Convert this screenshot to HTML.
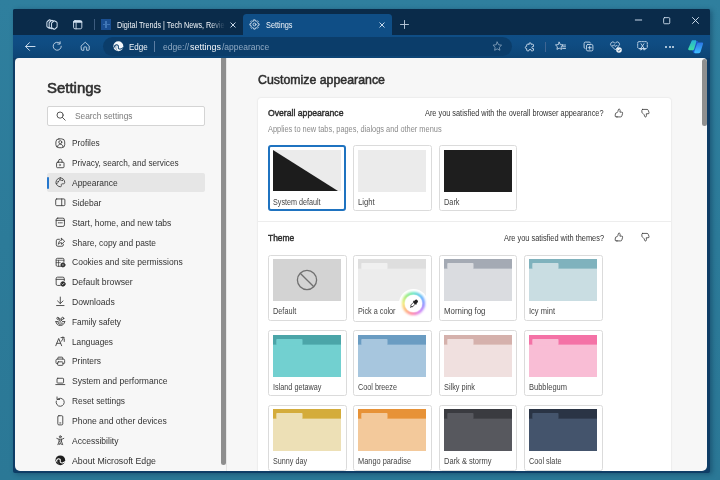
<!DOCTYPE html>
<html>
<head>
<meta charset="utf-8">
<style>
html,body{margin:0;padding:0;}
body{width:720px;height:480px;overflow:hidden;position:relative;background:#2e7d9b;font-family:"Liberation Sans",sans-serif;font-size:9px;}
.abs{position:absolute;}
svg{display:block;overflow:visible;}
.t{position:absolute;white-space:nowrap;line-height:1;transform-origin:0 0;}
#bg{left:0;top:0;width:720px;height:480px;background:linear-gradient(180deg,#2f7f9e 0%,#2c7b99 50%,#2b7896 100%);}
#win{left:12.7px;top:9.2px;width:697px;height:464.2px;background:#0e3d66;border-radius:2px;box-shadow:2px 1px 5px rgba(0,30,60,.38);}
#tabbar{left:12.7px;top:9.2px;width:697px;height:25.8px;background:#0a2b4a;border-radius:2px 2px 0 0;}
#activetab{left:242.9px;top:14px;width:148.8px;height:21.3px;background:#0f4e86;border-radius:3.5px 3.5px 0 0;}
#toolbar{left:12.7px;top:34.7px;width:697px;height:23.6px;background:linear-gradient(180deg,#0f4e86 0%,#0f4c82 40%,#0d4474 100%);}
#addr{left:102.5px;top:36.9px;width:409.5px;height:19.1px;background:#0b3d6a;border-radius:9.6px;}
#clip{left:15.1px;top:58.3px;width:691.7px;height:412.5px;overflow:hidden;border-radius:4px 4px 5px 5px;}
#clipin{left:-15.1px;top:-58.3px;width:720px;height:480px;}
#content{left:0;top:0;width:720px;height:480px;background:#f7f7f7;}
#split{left:221px;top:55px;width:5.2px;height:410.4px;background:#8e8e8e;border-radius:2.6px;}
#vline{left:226.3px;top:58px;width:1px;height:414px;background:#e6e6e6;}
#thumb{left:701.5px;top:59px;width:5.5px;height:67px;background:#8f8f8f;border-radius:2.5px;}
#card{left:257.7px;top:97.7px;width:413.2px;height:380px;background:#fff;border-radius:3px;box-shadow:0 0 2px rgba(0,0,0,.14);}
#divider{left:258px;top:221px;width:413px;height:1px;background:#ededed;}
#search{left:46.7px;top:105.8px;width:158.6px;height:20px;background:#fff;border:1px solid #d4d4d4;border-radius:2px;box-sizing:border-box;}
#selbg{left:46.7px;top:173.1px;width:158.6px;height:19.2px;background:#e6e6e6;border-radius:2px;}
#selbar{left:47.3px;top:176.7px;width:2.2px;height:12.6px;background:#2577cd;border-radius:1px;}
.tile{position:absolute;width:76.7px;height:64px;background:#fff;border:1px solid #dbdbdb;border-radius:2.5px;}
.tile.sel{width:74.2px;height:62.2px;border:2px solid #1f73c0;border-radius:3px;}
.tile .img{position:absolute;left:4px;top:3.5px;width:68px;height:42px;}
.ic{position:absolute;}
.ic *{fill:none;stroke:#3d3d3d;stroke-width:1;stroke-linecap:round;stroke-linejoin:round;}
.wic *{fill:none;stroke:#d3e2f1;stroke-width:.95;stroke-linecap:round;stroke-linejoin:round;}
</style>
</head>
<body>
<div id="bg" class="abs"></div>
<div id="win" class="abs"></div>
<div id="tabbar" class="abs"></div>
<div id="activetab" class="abs"></div>
<div id="toolbar" class="abs"></div>
<div id="addr" class="abs"></div>
<div id="clip" class="abs"><div id="clipin" class="abs">
<div id="content" class="abs"></div>
<div id="vline" class="abs"></div>
<div id="split" class="abs"></div>
<div id="thumb" class="abs"></div>
<div id="card" class="abs"></div>
<div id="divider" class="abs"></div>
<div id="search" class="abs"></div>
<div id="selbg" class="abs"></div>
<div id="selbar" class="abs"></div>
<div class="tile sel" style="left:268px;top:145px"></div>
<svg class="abs" style="left:273px;top:150px" width="68" height="41" viewBox="0 0 68 41"><rect width="68" height="41" fill="#ebebeb"/><polygon points="0,0 0,41 65,41" fill="#1c1c1c"/></svg>
<div class="tile" style="left:353.4px;top:145px"><div class="img" style="background:#ebebeb"></div></div>
<div class="tile" style="left:438.7px;top:145px"><div class="img" style="background:#1e1e1e"></div></div>
<div class="tile" style="left:268px;top:254.6px"><div class="img" style="background:#d3d3d3"></div><svg class="abs" style="left:28.200px;top:14.500px" width="20" height="20" viewBox="0 0 20 20"><circle cx="10" cy="10" r="9.6" fill="none" stroke="#707070" stroke-width="1.3"/><line x1="3.200" y1="3.200" x2="16.800" y2="16.800" stroke="#707070" stroke-width="1.3"/></svg></div>
<div class="tile" style="left:353.4px;top:254.6px;height:65.700px"><svg class="img" viewBox="0 0 68 41" preserveAspectRatio="none"><rect width="68" height="41" fill="#ececec"/><rect width="68" height="9.4" fill="#dedede"/><rect x="3.3" y="3.9" width="26.2" height="6" rx="0.8" fill="#f0f0f0"/></svg></div>
<div class="tile" style="left:438.7px;top:254.6px"><svg class="img" viewBox="0 0 68 41" preserveAspectRatio="none"><rect width="68" height="41" fill="#dadce0"/><rect width="68" height="9.4" fill="#a4aab4"/><rect x="3.3" y="3.9" width="26.2" height="6" rx="0.8" fill="#dadce0"/></svg></div>
<div class="tile" style="left:524px;top:254.6px"><svg class="img" viewBox="0 0 68 41" preserveAspectRatio="none"><rect width="68" height="41" fill="#c9dde2"/><rect width="68" height="9.4" fill="#7fb2bd"/><rect x="3.3" y="3.9" width="26.2" height="6" rx="0.8" fill="#c9dde2"/></svg></div>
<div class="tile" style="left:268px;top:330.4px"><svg class="img" viewBox="0 0 68 41" preserveAspectRatio="none"><rect width="68" height="41" fill="#72d0d0"/><rect width="68" height="9.4" fill="#4ba5a8"/><rect x="3.3" y="3.9" width="26.2" height="6" rx="0.8" fill="#72d0d0"/></svg></div>
<div class="tile" style="left:353.4px;top:330.4px"><svg class="img" viewBox="0 0 68 41" preserveAspectRatio="none"><rect width="68" height="41" fill="#a7c6de"/><rect width="68" height="9.4" fill="#6a9cc2"/><rect x="3.3" y="3.9" width="26.2" height="6" rx="0.8" fill="#a7c6de"/></svg></div>
<div class="tile" style="left:438.7px;top:330.4px"><svg class="img" viewBox="0 0 68 41" preserveAspectRatio="none"><rect width="68" height="41" fill="#f0e0df"/><rect width="68" height="9.4" fill="#d5b1ac"/><rect x="3.3" y="3.9" width="26.2" height="6" rx="0.8" fill="#f0e0df"/></svg></div>
<div class="tile" style="left:524px;top:330.4px"><svg class="img" viewBox="0 0 68 41" preserveAspectRatio="none"><rect width="68" height="41" fill="#f9bdd5"/><rect width="68" height="9.4" fill="#f472a6"/><rect x="3.3" y="3.9" width="26.2" height="6" rx="0.8" fill="#f9bdd5"/></svg></div>
<div class="tile" style="left:268px;top:404.6px"><svg class="img" viewBox="0 0 68 41" preserveAspectRatio="none"><rect width="68" height="41" fill="#ede0b6"/><rect width="68" height="9.4" fill="#d4ac3b"/><rect x="3.3" y="3.9" width="26.2" height="6" rx="0.8" fill="#ede0b6"/></svg></div>
<div class="tile" style="left:353.4px;top:404.6px"><svg class="img" viewBox="0 0 68 41" preserveAspectRatio="none"><rect width="68" height="41" fill="#f3c99b"/><rect width="68" height="9.4" fill="#e79237"/><rect x="3.3" y="3.9" width="26.2" height="6" rx="0.8" fill="#f3c99b"/></svg></div>
<div class="tile" style="left:438.7px;top:404.6px"><svg class="img" viewBox="0 0 68 41" preserveAspectRatio="none"><rect width="68" height="41" fill="#57585e"/><rect width="68" height="9.4" fill="#3a3b40"/><rect x="3.3" y="3.9" width="26.2" height="6" rx="0.8" fill="#57585e"/></svg></div>
<div class="tile" style="left:524px;top:404.6px"><svg class="img" viewBox="0 0 68 41" preserveAspectRatio="none"><rect width="68" height="41" fill="#44546c"/><rect width="68" height="9.4" fill="#2a3445"/><rect x="3.3" y="3.9" width="26.2" height="6" rx="0.8" fill="#44546c"/></svg></div>
<div class="abs" style="left:399.2px;top:288.9px;width:29px;height:29px;border-radius:50%;background:#fff"></div><div class="abs" style="left:402.2px;top:291.9px;width:23px;height:23px;border-radius:50%;filter:blur(1.1px);background:conic-gradient(from 0deg,#62e6c4,#5ab0ff 55deg,#8f84ff 100deg,#d57df2 145deg,#ff7fa6 185deg,#ffb070 228deg,#f3ea70 270deg,#92ea72 318deg,#62e6c4)"></div><div class="abs" style="left:405.4px;top:295.1px;width:16.6px;height:16.6px;border-radius:50%;background:#fff;box-shadow:0 0 1.5px 0.5px rgba(255,255,255,.9)"></div><svg class="abs" style="left:409px;top:298.6px" width="9.6" height="9.6" viewBox="0 0 12 12"><path d="M7.600 1.300a2.200 2.200 0 0 1 3.100 3.100L9.300 5.800l.500.500-1 1-.700-.700-3.800 3.800H2.400l-.800.800-.500-.500.800-.800V7.500l3.800-3.800-.700-.700 1-1 .500.500z" fill="#222"/><path d="M5.500 4.700L2.800 7.400v1.800h1.800l2.700-2.700z" fill="#fff"/></svg>
<svg class="ic" style="left:54.5px;top:137.7px" width="10.600" height="10.600" viewBox="0 0 12 12"><rect x="1" y="1" width="10" height="10" rx="3.4"/><circle cx="6" cy="4.7" r="1.7"/><path d="M2.9 9.8c.3-2 1.7-2.7 3.1-2.7s2.8.7 3.1 2.7"/></svg>
<svg class="ic" style="left:54.5px;top:157.5px" width="10.600" height="10.600" viewBox="0 0 12 12"><rect x="1.8" y="4.8" width="8.4" height="6.2" rx="1"/><path d="M4 4.8V3.4a2 2 0 0 1 4 0v1.4"/><path d="M5.3 7l1.6.9-1.6.9z" style="fill:#3d3d3d;stroke-width:.4"/></svg>
<svg class="ic" style="left:54.5px;top:177.3px" width="10.600" height="10.600" viewBox="0 0 12 12"><path d="M6 1a5 5 0 1 0 .3 10c.9 0 1.2-.8.9-1.5-.4-1 .2-1.8 1.200-1.800h1.200A1.500 1.500 0 0 0 11 6.200 5 5 0 0 0 6 1z"/><circle cx="3.600" cy="5" r=".4"/><circle cx="5.500" cy="3.300" r=".4"/><circle cx="8" cy="3.800" r=".4"/><path d="M1.200 7.300c.8 .500 1.700 .200 2-.800"/></svg>
<svg class="ic" style="left:54.5px;top:197.2px" width="10.600" height="10.600" viewBox="0 0 12 12"><rect x=".8" y="2.200" width="10.400" height="7.600" rx="1.100"/><path d="M7.600 2.200v7.600"/></svg>
<svg class="ic" style="left:54.5px;top:217.0px" width="10.600" height="10.600" viewBox="0 0 12 12"><rect x="1.300" y="1.300" width="9.400" height="9.400" rx="1.800"/><path d="M1.300 3.800h9.400"/><path d="M3.800 6.600h4.400" style="stroke-dasharray:.8 1"/></svg>
<svg class="ic" style="left:54.5px;top:236.8px" width="10.600" height="10.600" viewBox="0 0 12 12"><path d="M5 2.600H3.200A1.700 1.700 0 0 0 1.500 4.300v4.500a1.700 1.700 0 0 0 1.700 1.700h4.600a1.700 1.700 0 0 0 1.700-1.700V8.200"/><path d="M7.300 1.500l3.700 3.400-3.700 3.400V6.400C5.600 6.400 4.600 7 3.900 8.300c.1-2.900 1.500-4.700 3.400-4.800z"/></svg>
<svg class="ic" style="left:54.5px;top:256.6px" width="10.600" height="10.600" viewBox="0 0 12 12"><path d="M7 10.500H2.600a1.300 1.300 0 0 1-1.300-1.300V2.800a1.300 1.300 0 0 1 1.300-1.300h6.200a1.300 1.300 0 0 1 1.300 1.300V6"/><path d="M1.300 3.700h8.800M4 3.700v6.800M1.300 6.400H6" style="stroke-width:.8"/><circle cx="9" cy="9" r="2.300" style="fill:#2b2b2b;stroke:#2b2b2b"/><circle cx="9" cy="9" r=".7" style="fill:#f7f7f7;stroke:none"/></svg>
<svg class="ic" style="left:54.5px;top:276.4px" width="10.600" height="10.600" viewBox="0 0 12 12"><path d="M6 10.700H2.900a1.600 1.600 0 0 1-1.600-1.600V2.900a1.600 1.600 0 0 1 1.600-1.600h6a1.600 1.600 0 0 1 1.600 1.600V5.500"/><path d="M1.300 3.800h9.200"/><circle cx="9" cy="9" r="2.500" style="fill:#2b2b2b;stroke:#2b2b2b"/><path d="M7.900 9l.8.800 1.500-1.600" style="stroke:#f7f7f7;stroke-width:.8"/></svg>
<svg class="ic" style="left:54.5px;top:296.3px" width="10.600" height="10.600" viewBox="0 0 12 12"><path d="M6 1.200v7.300M2.900 5.600L6 8.600l3.100-3M1.800 10.800h8.400"/></svg>
<svg class="ic" style="left:54.5px;top:316.1px" width="10.600" height="10.600" viewBox="0 0 12 12"><circle cx="3.300" cy="2.700" r="1.250"/><circle cx="8.700" cy="2.700" r="1.250"/><circle cx="6" cy="4.700" r="1.300"/><path d="M.9 6.300h2.700M8.400 6.300h2.700M1 6.400c.2 2.500 2.200 4.400 5 4.400s4.800-1.900 5-4.400"/><path d="M3.600 7.900h4.800c-.2 1.100-1.100 1.700-2.400 1.700s-2.200-.6-2.400-1.700z" style="stroke-width:.8"/></svg>
<svg class="ic" style="left:54.5px;top:335.9px" width="10.600" height="10.600" viewBox="0 0 12 12"><path d="M.9 11L4.200 2.800 7.500 11M2.100 8.300h4.200"/><path d="M6.800 1.800h3.600M9 1v.8c0 0 .6 3-2 4.200M10.500 3.200v3"/></svg>
<svg class="ic" style="left:54.5px;top:355.7px" width="10.600" height="10.600" viewBox="0 0 12 12"><path d="M3.200 3.500V2.300a1 1 0 0 1 1-1h3.600a1 1 0 0 1 1 1v1.200"/><path d="M3 8.600H2.100a1 1 0 0 1-1-1V5a1.500 1.500 0 0 1 1.500-1.500h6.800A1.500 1.500 0 0 1 10.900 5v2.600a1 1 0 0 1-1 1H9"/><rect x="3" y="6.600" width="6" height="4" rx=".8"/></svg>
<svg class="ic" style="left:54.5px;top:375.5px" width="10.600" height="10.600" viewBox="0 0 12 12"><rect x="2.300" y="2.600" width="7.400" height="5.400" rx=".8"/><path d="M.9 9.700h10.200"/></svg>
<svg class="ic" style="left:54.5px;top:395.4px" width="10.600" height="10.600" viewBox="0 0 12 12"><path d="M2.300 2.200v2.900h2.900"/><path d="M2.500 5A4.600 4.600 0 1 1 1.400 6.900"/></svg>
<svg class="ic" style="left:54.5px;top:415.2px" width="10.600" height="10.600" viewBox="0 0 12 12"><rect x="3.200" y=".8" width="5.600" height="10.400" rx="1.200"/><path d="M5.400 9h1.200"/></svg>
<svg class="ic" style="left:54.5px;top:435.0px" width="10.600" height="10.600" viewBox="0 0 12 12"><circle cx="6" cy="2" r="1.100"/><path d="M2 3.900c1 .6 2.600 1 4 1s3-.4 4-1M4.600 4.900v2.500L3.300 11M7.400 4.900v2.500L8.700 11M4.600 7.400L6 6.600l1.400.8M4.900 10.800L6 8.600l1.100 2.200"/></svg>
<svg class="ic" style="left:54.5px;top:454.8px" width="10.600" height="10.600" viewBox="0 0 12 12"><circle cx="6" cy="6" r="5.500" style="fill:#1e1e1e;stroke:none"/><path d="M1.300 7.400C1.800 4.300 4.300 3.600 5.600 4.800 6.800 5.900 5.200 7.200 6.300 8.400 7.300 9.400 9.600 9.200 10.800 7.800" style="stroke:#f7f7f7;stroke-width:1.250"/><path d="M2.900 5.200C2.500 7.300 3 9.300 4.400 10.800" style="stroke:#f7f7f7;stroke-width:.5;opacity:.6"/></svg>
<svg class="ic" style="left:55.900px;top:111px" width="10" height="10" viewBox="0 0 10 10"><circle cx="4.100" cy="4.100" r="3.100" style="stroke:#555"/><path d="M6.400 6.400l2.800 2.800" style="stroke:#555"/></svg>
<svg class="ic" style="left:614.0px;top:107.7px" width="10" height="10" viewBox="0 0 12 12"><path d="M3.600 10.600H2.400a1 1 0 0 1-1-1.100l.3-2.600a1.200 1.200 0 0 1 1.200-1.100h.7c.8-.9 1.400-2.100 1.500-3.400.1-.8.600-1.200 1.200-1.100.8.100 1.200.9 1.100 1.800l-.3 1.900h2.100a1.100 1.100 0 0 1 1.100 1.400l-.8 3a1.700 1.700 0 0 1-1.700 1.300H3.600z"/></svg>
<svg class="ic" style="left:614.0px;top:231.7px" width="10" height="10" viewBox="0 0 12 12"><path d="M3.600 10.600H2.400a1 1 0 0 1-1-1.100l.3-2.600a1.200 1.200 0 0 1 1.200-1.100h.7c.8-.9 1.400-2.100 1.500-3.400.1-.8.600-1.200 1.200-1.100.8.100 1.200.9 1.100 1.800l-.3 1.900h2.100a1.100 1.100 0 0 1 1.100 1.400l-.8 3a1.700 1.700 0 0 1-1.700 1.300H3.600z"/></svg>
<svg class="ic" style="left:639.6px;top:108.0px" width="10" height="10" viewBox="0 0 12 12"><path d="M3 1.500h5.400a1.700 1.700 0 0 1 1.600 1.200l.8 2.600A1.100 1.100 0 0 1 9.700 6.700H7.500l.2 1.700c.2 1.100-.2 2.100-1 2.200-.7.100-1.100-.4-1.200-1.200C5.300 8.200 4.600 7.200 3.700 6.500L3 6A1.700 1.700 0 0 1 2.300 4.700l-.1-2A1.200 1.200 0 0 1 3 1.500z" transform="translate(0 .2)"/></svg>
<svg class="ic" style="left:639.6px;top:232.0px" width="10" height="10" viewBox="0 0 12 12"><path d="M3 1.500h5.400a1.700 1.700 0 0 1 1.600 1.200l.8 2.600A1.100 1.100 0 0 1 9.700 6.700H7.500l.2 1.700c.2 1.100-.2 2.100-1 2.200-.7.100-1.100-.4-1.200-1.200C5.300 8.200 4.600 7.200 3.700 6.500L3 6A1.700 1.700 0 0 1 2.300 4.700l-.1-2A1.200 1.200 0 0 1 3 1.500z" transform="translate(0 .2)"/></svg>
<div class="t" style="left:46.8px;top:81.1px;font-size:14.4px;font-weight:400;color:#2e2e2e;transform:scaleX(1.040);-webkit-text-stroke:0.55px #2e2e2e">Settings</div>
<div class="t" style="left:75.0px;top:112.1px;font-size:9.2px;font-weight:400;color:#7a7a7a;transform:scaleX(0.908)">Search settings</div>
<div class="t" style="left:72.3px;top:139.4px;font-size:9.1px;font-weight:400;color:#323232;transform:scaleX(0.913)">Profiles</div>
<div class="t" style="left:72.3px;top:159.2px;font-size:9.1px;font-weight:400;color:#323232;transform:scaleX(0.907)">Privacy, search, and services</div>
<div class="t" style="left:72.3px;top:179.0px;font-size:9.1px;font-weight:400;color:#323232;transform:scaleX(0.932)">Appearance</div>
<div class="t" style="left:72.3px;top:198.9px;font-size:9.1px;font-weight:400;color:#323232;transform:scaleX(0.938)">Sidebar</div>
<div class="t" style="left:72.3px;top:218.7px;font-size:9.1px;font-weight:400;color:#323232;transform:scaleX(0.936)">Start, home, and new tabs</div>
<div class="t" style="left:72.3px;top:238.5px;font-size:9.1px;font-weight:400;color:#323232;transform:scaleX(0.923)">Share, copy and paste</div>
<div class="t" style="left:72.3px;top:258.3px;font-size:9.1px;font-weight:400;color:#323232;transform:scaleX(0.936)">Cookies and site permissions</div>
<div class="t" style="left:72.3px;top:278.1px;font-size:9.1px;font-weight:400;color:#323232;transform:scaleX(0.953)">Default browser</div>
<div class="t" style="left:72.3px;top:298.0px;font-size:9.1px;font-weight:400;color:#323232;transform:scaleX(0.949)">Downloads</div>
<div class="t" style="left:72.3px;top:317.8px;font-size:9.1px;font-weight:400;color:#323232;transform:scaleX(0.915)">Family safety</div>
<div class="t" style="left:72.3px;top:337.6px;font-size:9.1px;font-weight:400;color:#323232;transform:scaleX(0.911)">Languages</div>
<div class="t" style="left:72.3px;top:357.4px;font-size:9.1px;font-weight:400;color:#323232;transform:scaleX(0.925)">Printers</div>
<div class="t" style="left:72.3px;top:377.2px;font-size:9.1px;font-weight:400;color:#323232;transform:scaleX(0.939)">System and performance</div>
<div class="t" style="left:72.3px;top:397.1px;font-size:9.1px;font-weight:400;color:#323232;transform:scaleX(0.920)">Reset settings</div>
<div class="t" style="left:72.3px;top:416.9px;font-size:9.1px;font-weight:400;color:#323232;transform:scaleX(0.941)">Phone and other devices</div>
<div class="t" style="left:72.3px;top:436.7px;font-size:9.1px;font-weight:400;color:#323232;transform:scaleX(0.937)">Accessibility</div>
<div class="t" style="left:72.3px;top:456.5px;font-size:9.1px;font-weight:400;color:#323232;transform:scaleX(0.966)">About Microsoft Edge</div>
<div class="t" style="left:258.0px;top:74.2px;font-size:12.2px;font-weight:400;color:#2e2e2e;transform:scaleX(1.013);-webkit-text-stroke:0.5px #2e2e2e">Customize appearance</div>
<div class="t" style="left:267.5px;top:109.1px;font-size:8.8px;font-weight:400;color:#2b2b2b;transform:scaleX(0.983);-webkit-text-stroke:0.4px #2b2b2b">Overall appearance</div>
<div class="t" style="left:425.0px;top:109.1px;font-size:8.6px;font-weight:400;color:#333;transform:scaleX(0.855)">Are you satisfied with the overall browser appearance?</div>
<div class="t" style="left:267.5px;top:125.2px;font-size:8.6px;font-weight:400;color:#8b8b8b;transform:scaleX(0.861)">Applies to new tabs, pages, dialogs and other menus</div>
<div class="t" style="left:272.7px;top:197.7px;font-size:8.6px;font-weight:400;color:#444;transform:scaleX(0.837)">System default</div>
<div class="t" style="left:358.0px;top:197.7px;font-size:8.6px;font-weight:400;color:#444;transform:scaleX(0.896)">Light</div>
<div class="t" style="left:443.5px;top:197.7px;font-size:8.6px;font-weight:400;color:#444;transform:scaleX(0.854)">Dark</div>
<div class="t" style="left:268.0px;top:233.7px;font-size:8.8px;font-weight:400;color:#2b2b2b;transform:scaleX(0.957);-webkit-text-stroke:0.4px #2b2b2b">Theme</div>
<div class="t" style="left:503.5px;top:233.7px;font-size:8.6px;font-weight:400;color:#333;transform:scaleX(0.858)">Are you satisfied with themes?</div>
<div class="t" style="left:272.8px;top:307.4px;font-size:8.6px;font-weight:400;color:#444;transform:scaleX(0.852)">Default</div>
<div class="t" style="left:358.2px;top:307.4px;font-size:8.6px;font-weight:400;color:#444;transform:scaleX(0.844)">Pick a color</div>
<div class="t" style="left:443.5px;top:307.4px;font-size:8.6px;font-weight:400;color:#444;transform:scaleX(0.914)">Morning fog</div>
<div class="t" style="left:528.8px;top:307.4px;font-size:8.6px;font-weight:400;color:#444;transform:scaleX(0.878)">Icy mint</div>
<div class="t" style="left:272.8px;top:383.2px;font-size:8.6px;font-weight:400;color:#444;transform:scaleX(0.846)">Island getaway</div>
<div class="t" style="left:358.2px;top:383.2px;font-size:8.6px;font-weight:400;color:#444;transform:scaleX(0.842)">Cool breeze</div>
<div class="t" style="left:443.5px;top:383.2px;font-size:8.6px;font-weight:400;color:#444;transform:scaleX(0.854)">Silky pink</div>
<div class="t" style="left:528.8px;top:383.2px;font-size:8.6px;font-weight:400;color:#444;transform:scaleX(0.874)">Bubblegum</div>
<div class="t" style="left:272.8px;top:457.4px;font-size:8.6px;font-weight:400;color:#444;transform:scaleX(0.837)">Sunny day</div>
<div class="t" style="left:358.2px;top:457.4px;font-size:8.6px;font-weight:400;color:#444;transform:scaleX(0.860)">Mango paradise</div>
<div class="t" style="left:443.5px;top:457.4px;font-size:8.6px;font-weight:400;color:#444;transform:scaleX(0.873)">Dark &amp; stormy</div>
<div class="t" style="left:528.8px;top:457.4px;font-size:8.6px;font-weight:400;color:#444;transform:scaleX(0.850)">Cool slate</div>
</div></div>
<svg class="ic wic" style="left:46.0px;top:19.2px;" width="11" height="10.2" viewBox="0 0 11 10.200"><path d="M2.300 .400L4 1.300a1 1 0 0 1 .500 .900v2.800a1 1 0 0 1-.500 .900L2.300 7.200a1 1 0 0 1-.900 0L-.300 6.300a1 1 0 0 1-.500-.900V2.600a1 1 0 0 1 .500-.900L1.400 .400a1 1 0 0 1 .900 0z" transform="translate(1.700 .500) scale(1.050 1.200)" style="fill:#0a2b4a"/><path d="M2.300 .400L4 1.300a1 1 0 0 1 .500 .900v2.800a1 1 0 0 1-.500 .900L2.300 7.200a1 1 0 0 1-.900 0L-.300 6.300a1 1 0 0 1-.500-.900V2.600a1 1 0 0 1 .500-.900L1.400 .400a1 1 0 0 1 .900 0z" transform="translate(4 1) scale(1.050 1.200)" style="fill:#0a2b4a"/><path d="M2.300 .400L4 1.300a1 1 0 0 1 .500 .900v2.800a1 1 0 0 1-.500 .900L2.300 7.200a1 1 0 0 1-.900 0L-.300 6.300a1 1 0 0 1-.500-.900V2.600a1 1 0 0 1 .500-.900L1.400 .400a1 1 0 0 1 .900 0z" transform="translate(6.400 1.500) scale(1.050 1.200)" style="fill:#0a2b4a"/></svg>
<svg class="ic wic" style="left:72.8px;top:19.7px;" width="9.4" height="9.4" viewBox="0 0 10 10"><rect x=".6" y=".6" width="8.800" height="8.800" rx="1.600"/><path d="M1.200 .8h7.600a1 1 0 0 1 1 1v1.200H.2V1.800a1 1 0 0 1 1-1z" style="fill:#d3e2f1;stroke:none"/><path d="M3.300 3v6.400"/></svg>
<div class="abs" style="left:94.200px;top:19px;width:1px;height:11px;background:#3d5c7e"></div>
<div class="abs" style="left:101px;top:19px;width:10.300px;height:10.700px;background:#1a4f92"></div>
<div class="abs" style="left:105.400px;top:20.500px;width:1.200px;height:7.700px;background:#3f76b6"></div>
<div class="abs" style="left:102.500px;top:24px;width:7.300px;height:1.200px;background:#3f76b6"></div>
<svg class="ic wic" style="left:230.3px;top:21.7px;" width="6" height="6" viewBox="0 0 6 6"><path d="M.8 .8l4.400 4.400M5.200 .8L.8 5.200"/></svg>
<svg class="ic wic" style="left:378.7px;top:21.7px;" width="6" height="6" viewBox="0 0 6 6"><path d="M.8 .8l4.400 4.400M5.200 .8L.8 5.200"/></svg>
<svg class="ic wic" style="left:400.2px;top:19.7px;" width="9" height="9" viewBox="0 0 9 9"><path d="M4.500 .5v8M.5 4.500h8" style="stroke:#b9c8d9"/></svg>
<svg class="ic wic" style="left:249.2px;top:19.2px;" width="11" height="11" viewBox="0 0 12 12"><path d="M5.20 0.96 L6.80 0.96 L6.97 2.22 L7.99 2.64 L9.00 1.87 L10.13 3.00 L9.36 4.01 L9.78 5.03 L11.04 5.20 L11.04 6.80 L9.78 6.97 L9.36 7.99 L10.13 9.00 L9.00 10.13 L7.99 9.36 L6.97 9.78 L6.80 11.04 L5.20 11.04 L5.03 9.78 L4.01 9.36 L3.00 10.13 L1.87 9.00 L2.64 7.99 L2.22 6.97 L0.96 6.80 L0.96 5.20 L2.22 5.03 L2.64 4.01 L1.87 3.00 L3.00 1.87 L4.01 2.64 L5.03 2.22z" style="stroke-linejoin:round"/><circle cx="6" cy="6" r="1.600"/></svg>
<svg class="ic wic" style="left:634.5px;top:19.3px;" width="7" height="2" viewBox="0 0 7 2"><path d="M.3 1h6.400"/></svg>
<svg class="ic wic" style="left:662.6px;top:16.6px;" width="7.4" height="7.4" viewBox="0 0 8 8"><rect x=".7" y=".7" width="6.600" height="6.600" rx="1"/></svg>
<svg class="ic wic" style="left:691.5px;top:16.8px;" width="7" height="7" viewBox="0 0 7 7"><path d="M.5 .5l6 6M6.500 .5l-6 6"/></svg>
<svg class="ic wic" style="left:25.1px;top:41.8px;" width="10.5" height="9" viewBox="0 0 10.500 9"><path d="M4.500 .6L.6 4.500l3.900 3.900M.8 4.500h9.200"/></svg>
<svg class="ic wic" style="left:52.2px;top:41.0px;" width="10.5" height="10.5" viewBox="0 0 12 12"><path d="M10.600 6A4.600 4.600 0 1 1 8.800 2.300"/><path d="M9.300 .8v2.700H6.600"/></svg>
<svg class="ic wic" style="left:79.8px;top:41.0px;" width="10.5" height="10.5" viewBox="0 0 12 12"><path d="M1.500 5.600L6 1.400l4.500 4.200v4.200a.8.800 0 0 1-.8.800H7.600V7.400a.6.600 0 0 0-.6-.6H5a.6.600 0 0 0-.6.600v3.200H2.300a.8.800 0 0 1-.8-.8z"/></svg>
<svg class="abs" style="left:112.700px;top:40.800px" width="10.700" height="10.700" viewBox="0 0 12 12"><circle cx="6" cy="6" r="5.600" fill="#f4f8fb"/><path d="M1.100 7.300C1.700 4.300 4.300 3.700 5.600 4.900 6.800 6 5.300 7.300 6.400 8.500 7.400 9.500 9.700 9.200 11 7.600" fill="none" stroke="#0c3f6e" stroke-width="1.150" stroke-linecap="round"/><path d="M3.300 5.200C2.800 7.300 3.400 9.400 4.800 11" fill="none" stroke="#0c3f6e" stroke-width=".7" opacity=".75"/></svg>
<div class="abs" style="left:154.300px;top:41px;width:1px;height:11px;background:#5c7da2"></div>
<svg class="ic wic" style="left:491.9px;top:41.0px;opacity:.62" width="10.5" height="10.5" viewBox="0 0 12 12"><path d="M6 1.200l1.500 3.100 3.400.5-2.500 2.400.6 3.400L6 9l-3 1.600.6-3.400L1.100 4.800l3.400-.5z"/></svg>
<svg class="ic wic" style="left:524.8px;top:41.7px;" width="10" height="10" viewBox="0 0 12 12"><path d="M4.700 2.200a1.300 1.300 0 0 1 2.600 0v.5h1.900a1 1 0 0 1 1 1v1.700h-.7a1.300 1.300 0 0 0 0 2.600h.7v1.600a1 1 0 0 1-1 1H7.500v-.4a1.400 1.400 0 0 0-2.800 0v.4H3a1 1 0 0 1-1-1V7.900h-.300a1.300 1.300 0 0 1 0-2.600H2V3.700a1 1 0 0 1 1-1h1.700z" style="stroke-width:1.050"/></svg>
<div class="abs" style="left:544.800px;top:41.700px;width:1px;height:10px;background:#3f6592"></div>
<svg class="ic wic" style="left:555.3px;top:41.2px;" width="11" height="10.5" viewBox="0 0 12.500 12"><path d="M4.800 1.400l1.300 2.700 3 .4-2.200 2.100.5 3L4.800 8.200 2.200 9.600l.5-3L.5 4.500l3-.4z"/><path d="M8.700 4.600h3.300M8.300 6.600h3.700M8.700 8.600h3.300"/></svg>
<svg class="ic wic" style="left:582.5px;top:40.8px;" width="11" height="11" viewBox="0 0 12 12"><path d="M2.300 8.300A1.500 1.500 0 0 1 1.200 6.800V2.700a1.500 1.500 0 0 1 1.500-1.500h4.100a1.500 1.500 0 0 1 1.400 1"/><rect x="3.800" y="3.800" width="7" height="7" rx="1.500"/><path d="M7.300 5.600v3.400M5.600 7.300H9"/></svg>
<svg class="ic wic" style="left:609.5px;top:41.0px;" width="10.2" height="9.6" viewBox="0 0 12 11"><path d="M6 10L1.500 5.500a2.650 2.650 0 0 1 3.750-3.750L6 2.500l.750-.750a2.650 2.650 0 0 1 3.750 3.750z"/><path d="M2.800 5.300h1.500l.8-1.300 1.200 2.500.8-1.200h1.200" style="stroke-width:.8"/></svg>
<svg class="abs" style="left:615.900px;top:46.700px" width="6" height="6" viewBox="0 0 6 6"><circle cx="3" cy="3" r="2.800" fill="#eef3f8"/><path d="M1.700 3.100l1 .9 1.600-1.900" fill="none" stroke="#0e4778" stroke-width=".8"/></svg>
<svg class="ic wic" style="left:636.7px;top:41.2px;" width="11" height="9.5" viewBox="0 0 12 10.500"><rect x=".7" y=".7" width="10.600" height="7.600" rx="1.200" style="stroke-dasharray:2 1.200"/><path d="M4.400 3l3.200 5M7.600 3L4.400 8"/><circle cx="4.200" cy="9" r=".9"/><circle cx="7.800" cy="9" r=".9"/></svg>
<div class="abs" style="left:665.25px;top:45.700px;width:1.900px;height:1.900px;border-radius:50%;background:#dbe7f3"></div>
<div class="abs" style="left:668.75px;top:45.700px;width:1.900px;height:1.900px;border-radius:50%;background:#dbe7f3"></div>
<div class="abs" style="left:672.25px;top:45.700px;width:1.900px;height:1.900px;border-radius:50%;background:#dbe7f3"></div>
<svg class="abs" style="left:688px;top:39.800px" width="15.500" height="14" viewBox="0 0 15.500 14"><defs><linearGradient id="cp1" x1="0" y1="0" x2="0" y2="1"><stop offset="0" stop-color="#27b0d6"/><stop offset="1" stop-color="#3fe0a0"/></linearGradient><linearGradient id="cp2" x1="0" y1="0" x2="0" y2="1"><stop offset="0" stop-color="#2b74e4"/><stop offset="1" stop-color="#3fc0ff"/></linearGradient></defs><path d="M5.400 2.200c.3-.8.900-1.200 1.700-1.200h2.800l2.600 9-3 3.200H5.600L4 10z" fill="#1b55c6"/><path d="M3.300 1.700C3.600.8 4.200.3 5 .3h2.400c.8 0 1.200.6.900 1.500L6.200 8.900c-.3.900-.9 1.300-1.700 1.300H1.400C.5 10.200 0 9.500.3 8.600z" fill="url(#cp1)"/><path d="M9.100 3.700c.3-.8.900-1.200 1.700-1.200h3.100c1 0 1.400.7 1.100 1.600l-2.400 7.700c-.3.900-.9 1.400-1.800 1.400H7.300c-.9 0-1.300-.7-1-1.600z" fill="url(#cp2)"/></svg>
<div class="t" style="left:117.0px;top:20.6px;font-size:8.8px;font-weight:400;color:#f2f6fa;transform:scaleX(0.819)">Digital Trends | Tech News, Revie</div>
<div class="t" style="left:265.5px;top:20.6px;font-size:8.8px;font-weight:400;color:#f2f6fa;transform:scaleX(0.833)">Settings</div>
<div class="t" style="left:128.8px;top:41.8px;font-size:9.4px;font-weight:400;color:#f2f6fa;transform:scaleX(0.854)">Edge</div>
<div class="t" style="left:163.3px;top:41.8px;font-size:9.4px;font-weight:400;color:#8fa9c3;transform:scaleX(0.914)">edge://</div>
<div class="t" style="left:190.0px;top:41.8px;font-size:9.4px;font-weight:400;color:#f4f7fa;transform:scaleX(0.959)">settings</div>
<div class="t" style="left:221.5px;top:41.8px;font-size:9.4px;font-weight:400;color:#8fa9c3;transform:scaleX(0.905)">/appearance</div>
<div class="abs" style="left:211px;top:18px;width:17px;height:13px;background:linear-gradient(90deg,rgba(10,43,74,0),rgba(10,43,74,.75) 55%,#0a2b4a 90%)"></div>
</body>
</html>
